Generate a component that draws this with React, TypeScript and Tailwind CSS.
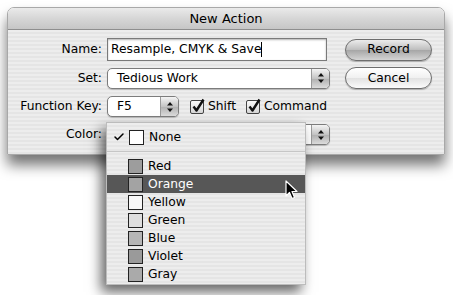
import { Check } from 'lucide-react';

const font = { fontFamily: '"DejaVu Sans", "Liberation Sans", sans-serif' };

const stripes =
  'bg-[repeating-linear-gradient(180deg,#ededed_0px,#ededed_2px,#e5e5e5_2px,#e5e5e5_4px)]';

function Arrows() {
  return (
    <svg width="8" height="12" viewBox="0 0 8 12">
      <path d="M4 1 L7 4.5 L1 4.5 Z" fill="#111" />
      <path d="M4 11 L7 7.5 L1 7.5 Z" fill="#111" />
    </svg>
  );
}

function Popup({ label, width, height = 21 }: { label: string; width: number; height?: number }) {
  return (
    <div
      className="flex rounded-[5px] border border-[#7c7c7c] bg-white overflow-hidden shadow-[0_1px_1px_rgba(0,0,0,0.2)]"
      style={{ width, height }}
    >
      <div className="flex-1 flex items-center pl-[9px] text-black">{label}</div>
      <div className="w-[18px] flex items-center justify-center border-l border-[#9a9a9a] bg-[linear-gradient(180deg,#f4f4f4,#c4c4c4_50%,#b0b0b0_51%,#dcdcdc)]">
        <Arrows />
      </div>
    </div>
  );
}

function CheckBox({ label }: { label: string }) {
  return (
    <div className="flex items-center gap-[4px]">
      <div className="relative w-[14px] h-[14px] border border-[#444] rounded-[2px] bg-[linear-gradient(180deg,#fafafa,#d6d6d6)]">
        <svg className="absolute -top-[3px] left-[1px]" width="13" height="15" viewBox="0 0 13 15">
          <path d="M1.5 8.5 L4.5 12.5 L11.5 1.5" stroke="#111" strokeWidth="2.4" fill="none" strokeLinejoin="round" />
        </svg>
      </div>
      <span>{label}</span>
    </div>
  );
}

function Button({ label, primary }: { label: string; primary?: boolean }) {
  return (
    <div
      className={`w-[87px] h-[22px] rounded-full border border-[#6e6e6e] flex items-center justify-center text-black shadow-[0_1px_1px_rgba(0,0,0,0.25)] ${
        primary
          ? 'bg-[linear-gradient(180deg,#ececec,#bdbdbd_50%,#a6a6a6_51%,#d4d4d4)]'
          : 'bg-[linear-gradient(180deg,#ffffff,#f0f0f0_50%,#e2e2e2_51%,#fbfbfb)]'
      }`}
    >
      {label}
    </div>
  );
}

const colors: { name: string; swatch: string }[] = [
  { name: 'Red', swatch: 'bg-[#9d9d9d]' },
  { name: 'Orange', swatch: 'bg-[#a3a3a3]' },
  { name: 'Yellow', swatch: 'bg-[#f7f7f7]' },
  { name: 'Green', swatch: 'bg-[#dedede]' },
  { name: 'Blue', swatch: 'bg-[#b6b6b6]' },
  { name: 'Violet', swatch: 'bg-[#9a9a9a]' },
  { name: 'Gray', swatch: 'bg-[#aaaaaa]' },
];

export default function App() {
  return (
    <div className="relative w-[453px] h-[295px] bg-white overflow-hidden pt-[7px] pl-[7px] text-[12.3px]" style={font}>
      {/* Dialog window */}
      <div className="w-[438px] h-[148px] rounded-t-[7px] overflow-hidden shadow-[0_10px_14px_rgba(0,0,0,0.55)] border border-[#a8a8a8]">
        <div className="h-[22px] flex items-center justify-center text-[13px] text-black border-b border-[#8e8e8e] bg-[linear-gradient(180deg,#eaeaea,#d6d6d6_50%,#c6c6c6)]">
          New Action
        </div>
        <div className={`h-[125px] ${stripes} pt-[8px] text-black`}>
          <div className="flex items-center h-[23px]">
            <div className="w-[94px] text-right">Name:</div>
            <div className="ml-[5px] w-[220px] h-[23px] border border-[#7a7a7a] bg-white flex items-center pl-[3px] shadow-[inset_0_1px_2px_rgba(0,0,0,0.3)]">
              Resample, CMYK &amp; Save<span className="w-px h-[15px] bg-black" />
            </div>
            <div className="ml-[18px]">
              <Button label="Record" primary />
            </div>
          </div>
          <div className="flex items-center h-[22px] mt-[6px]">
            <div className="w-[94px] text-right">Set:</div>
            <div className="ml-[5px]">
              <Popup label="Tedious Work" width={223} />
            </div>
            <div className="ml-[15px]">
              <Button label="Cancel" />
            </div>
          </div>
          <div className="flex items-center h-[21px] mt-[7px]">
            <div className="w-[94px] text-right">Function Key:</div>
            <div className="ml-[5px]">
              <Popup label="F5" width={72} />
            </div>
            <div className="ml-[11px]">
              <CheckBox label="Shift" />
            </div>
            <div className="ml-[10px]">
              <CheckBox label="Command" />
            </div>
          </div>
          <div className="flex items-center h-[21px] mt-[7px]">
            <div className="w-[94px] text-right">Color:</div>
            <div className="ml-[5px]">
              <Popup label="None" width={223} />
            </div>
          </div>
        </div>
      </div>

      {/* Pop-up menu */}
      <div
        className={`absolute left-[106px] top-[122px] w-[200px] h-[163px] ${stripes} border border-[#bcbcbc] shadow-[-5px_7px_12px_rgba(0,0,0,0.6)] text-black pt-[5px]`}
      >
        <div className="flex items-center h-[18px]">
          <Check className="ml-[6px] w-[12px] h-[12px]" strokeWidth={3} />
          <div className="ml-[4px] w-[15px] h-[15px] border border-[#222] bg-white" />
          <span className="ml-[5px]">None</span>
        </div>
        <div className="mt-[5px] mb-[5px] h-px bg-[#c6c6c6]" />
        {colors.map((c) => {
          const active = c.name === 'Orange';
          return (
            <div
              key={c.name}
              className={`flex items-center h-[18px] ${active ? 'bg-[#575757] text-white' : ''}`}
            >
              <div className={`ml-[21px] w-[15px] h-[15px] border border-[#222] ${c.swatch}`} />
              <span className="ml-[5px]">{c.name}</span>
            </div>
          );
        })}
      </div>

      {/* Mouse pointer */}
      <svg className="absolute left-[285px] top-[180px]" width="14" height="21" viewBox="0 0 14 21">
        <path
          d="M1 1 L1 16 L4.5 12.5 L7 18.5 L9.5 17.5 L7 11.5 L12 11.5 Z"
          fill="#000"
          stroke="#fff"
          strokeWidth="1.2"
          strokeLinejoin="round"
        />
      </svg>
    </div>
  );
}
